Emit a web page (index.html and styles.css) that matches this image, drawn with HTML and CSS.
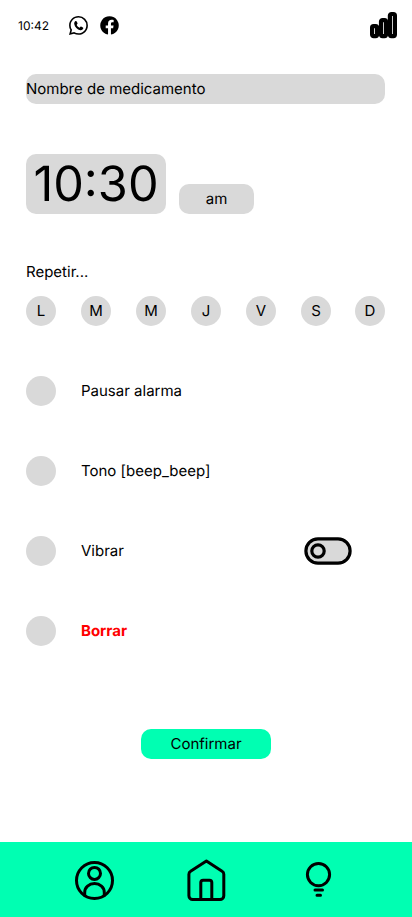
FILE: index.html
```html
<!DOCTYPE html>
<html lang="es">
<head>
<meta charset="utf-8">
<title>Alarma de medicamento</title>
<link rel="stylesheet" href="styles.css">
</head>
<body>
<div class="screen">
  <header class="status">
    <span class="clock">10:42</span>
    <svg class="whatsapp" width="19" height="19" viewBox="0 0 16 16"><path d="M13.601 2.326A7.85 7.85 0 0 0 7.994 0C3.627 0 .068 3.558.064 7.926c0 1.399.366 2.76 1.057 3.965L0 16l4.204-1.102a7.9 7.9 0 0 0 3.79.965h.004c4.368 0 7.926-3.558 7.93-7.93A7.9 7.9 0 0 0 13.6 2.326zM7.994 14.521a6.6 6.6 0 0 1-3.356-.92l-.24-.144-2.494.654.666-2.433-.156-.251a6.56 6.56 0 0 1-1.007-3.505c0-3.626 2.957-6.584 6.591-6.584a6.56 6.56 0 0 1 4.66 1.931 6.56 6.56 0 0 1 1.928 4.66c-.004 3.639-2.961 6.592-6.592 6.592"/><path d="M5.5 4.3c.5-.2.9 0 1.1.5l.6 1.4c.1.4-.3.8-.7 1.3.6 1.1 1.4 1.8 2.5 2.3.5-.6.8-1 1.2-.9l1.5.8c.4.2.4.6.2 1.1-.4.9-1.4 1.3-2.4 1.1C7 11.400 4.900 9.400 4.400 6.700c-.1-1 .3-2 1.100-2.400z"/></svg>
    <svg class="facebook" width="19" height="19" viewBox="0 0 19 19"><path d="M8.050 18.600V12.200H5.700V9.500h2.350V7.450c0-2.350 1.400-3.650 3.550-3.650.7 0 1.400.1 2.050.2v2.300h-1.200c-1.150 0-1.500.7-1.500 1.450V9.500h2.600l-.42 2.700h-2.180v6.400A9.250 9.250 0 1 0 8.050 18.600z"/></svg>
    <svg class="signal" width="28" height="28" viewBox="0 0 28 28"><rect x="3.100" y="15.100" width="5" height="10" rx="1.500"/><rect x="12" y="9.100" width="5" height="16" rx="1.500"/><rect x="20.900" y="3" width="5" height="22.100" rx="1.500"/></svg>
  </header>

  <main class="form">
    <div class="name">Nombre de medicamento</div>
    <div class="time-row">
      <div class="time">10:30</div>
      <div class="period">am</div>
    </div>
    <div class="repeat">Repetir...</div>
    <div class="days">
      <span class="dot">L</span><span class="dot">M</span><span class="dot">M</span><span class="dot">J</span><span class="dot">V</span><span class="dot">S</span><span class="dot">D</span>
    </div>
    <div class="options">
      <div class="option"><span class="dot"></span><span>Pausar alarma</span></div>
      <div class="option"><span class="dot"></span><span>Tono [beep_beep]</span></div>
      <div class="option"><span class="dot"></span><span>Vibrar</span>
        <svg class="toggle" width="48" height="28" viewBox="0 0 48 28"><rect x="1.900" y="1.900" width="44.200" height="24.200" rx="12.100"/><circle cx="14" cy="14" r="6.200"/></svg>
      </div>
      <div class="option delete"><span class="dot"></span><span>Borrar</span></div>
    </div>
    <div class="confirm">Confirmar</div>
  </main>

  <nav class="nav">
    <svg width="42" height="44" viewBox="0 0 42 44"><circle cx="21.500" cy="22.500" r="18"/><circle cx="21.500" cy="15.400" r="6"/><path d="M11.700 37.200V34.500c0-5 4.300-8.900 9.800-8.900s9.800 3.900 9.800 8.900v2.700"/></svg>
    <svg width="42" height="44" viewBox="0 0 42 44"><path d="M3.900 16.200q0-2 1.700-3L21.400 3.100 37.100 13.200q1.700 1 1.700 3V37.800a3.800 3.800 0 0 1-3.800 3.800H7.700a3.800 3.800 0 0 1-3.800-3.800z"/><path d="M15.800 41V24.500q0-2.300 2.300-2.300h6.400q2.300 0 2.300 2.300V41"/></svg>
    <svg width="42" height="44" viewBox="0 0 42 44"><circle cx="21.500" cy="16.600" r="11.100"/><path d="M18 32h7.500M20 37.200h3.500"/></svg>
  </nav>
</div>
</body>
</html>
```

FILE: styles.css
```css
* {
  box-sizing: border-box;
}

body {
  margin: 0;
  background: #fff;
  color: #000;
  font: 15px/18px Inter, "Liberation Sans", sans-serif;
  font-optical-sizing: none;
  text-rendering: geometricPrecision;
}

svg {
  display: block;
  flex: none;
}

.screen {
  display: flex;
  flex-direction: column;
  width: 412px;
  height: 917px;
}

.status {
  display: flex;
  align-items: center;
  height: 50px;
  padding: 0 15px 0 18px;
}

.clock {
  width: 51px;
  font-size: 12px;
  line-height: 15px;
}

.facebook {
  margin-left: 12px;
}

.signal {
  margin-left: auto;
  fill: #fff;
  stroke: #000;
  stroke-width: 4.200;
}

.form {
  display: flex;
  flex-direction: column;
  flex: 1;
  padding: 24px 27px 0 26px;
}

.name,
.time,
.period {
  border-radius: 10px;
  background: #d9d9d9;
}

.name {
  height: 30px;
  line-height: 30px;
}

.time-row {
  display: flex;
  align-items: flex-end;
  gap: 13px;
  margin-top: 50px;
}

.time {
  width: 140px;
  height: 60px;
  font-size: 48.600px;
  line-height: 60px;
  text-align: center;
}

.period {
  width: 75px;
  height: 30px;
  line-height: 30px;
  text-align: center;
}

.repeat {
  margin-top: 49px;
}

.days {
  display: flex;
  gap: 25px;
  margin-top: 15px;
}

.days .dot:last-child {
  margin-left: -1px;
}

.dot {
  flex: none;
  width: 30px;
  height: 30px;
  border-radius: 50%;
  background: #d9d9d9;
  line-height: 30px;
  text-align: center;
}

.options {
  display: flex;
  flex-direction: column;
  gap: 50px;
  margin-top: 50px;
}

.option {
  display: flex;
  align-items: center;
  gap: 25px;
  height: 30px;
}

.delete {
  color: #f00;
  font-weight: 700;
}

.toggle {
  margin: 0 33px 0 auto;
  fill: #d9d9d9;
  stroke: #000;
  stroke-width: 3.200;
}

.confirm {
  align-self: center;
  width: 130px;
  height: 30px;
  margin-top: 83px;
  padding-left: 1px;
  border-radius: 10px;
  background: #00ffb2;
  line-height: 30px;
  text-align: center;
}

.nav {
  display: flex;
  gap: 70px;
  height: 75px;
  padding: 16px 0 0 73px;
  background: #00ffb2;
}

.nav svg {
  fill: none;
  stroke: #000;
  stroke-width: 3;
  stroke-linecap: round;
  stroke-linejoin: round;
}
```
